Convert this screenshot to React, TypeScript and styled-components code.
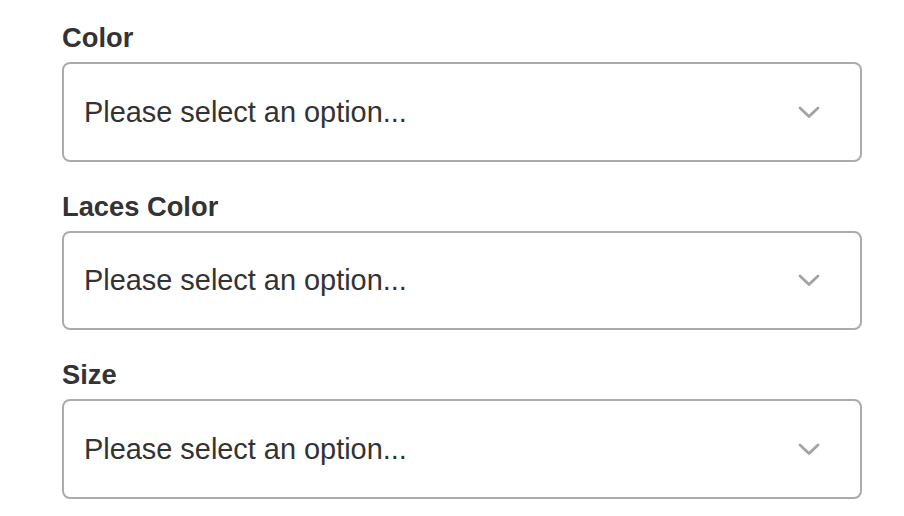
import styled, { createGlobalStyle } from "styled-components";

// 옵션 필드 목록
const FIELDS = ["Color", "Laces Color", "Size"];

const GlobalStyle = createGlobalStyle`
    html, body {
        margin: 0;
        padding: 0;
        background: #fff;
        font-family: "Liberation Sans", Arial, sans-serif;
    }
`;

// 아래 화살표 아이콘
const Chevron = () => (
    <svg width="22" height="13" viewBox="0 0 22 13" fill="none">
        <path
            d="M2 2 L11 10.5 L20 2"
            stroke="#a3a3a3"
            strokeWidth="2.8"
            strokeLinecap="round"
            strokeLinejoin="round"
        />
    </svg>
);

const App = () => {
    return (
        <>
            <GlobalStyle />
            <Form>
                {FIELDS.map((field) => (
                    <Field key={field}>
                        <Label>{field}</Label>
                        <SelectBox>
                            <Placeholder>Please select an option...</Placeholder>
                            <Chevron />
                        </SelectBox>
                    </Field>
                ))}
            </Form>
        </>
    );
};

export default App;

// 스타일 컴포넌트
const Form = styled.div`
    display: flex;
    flex-direction: column;
    gap: 29px;
    padding: 22px 0 0 62px;
    width: 800px;
`;

const Field = styled.div`
    display: flex;
    flex-direction: column;
    gap: 8px;
`;

const Label = styled.div`
    font-size: 27.3px;
    line-height: 32px;
    font-weight: 700;
    color: #333;
`;

const SelectBox = styled.div`
    box-sizing: border-box;
    height: 99.5px;
    display: flex;
    align-items: center;
    justify-content: space-between;
    padding: 1px 40px 0 20px;
    border: 2px solid #ababab;
    border-radius: 8px;
    background: #fff;
`;

const Placeholder = styled.span`
    font-size: 28.9px;
    color: #333;
`;
